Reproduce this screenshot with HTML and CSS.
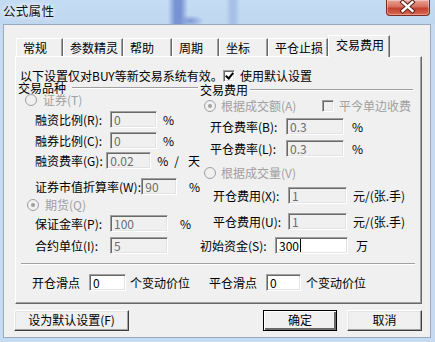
FILE: index.html
```html
<!DOCTYPE html>
<html>
  <head>
    <title>公式属性</title>
    <link rel="stylesheet" href="styles.css">
  </head>
  <body>
    <div class="window">
      <div class="titlebar">
        <span class="title">公式属性</span>
        <span class="close">
          <svg width="44" height="16" viewBox="0 0 44 16">
            <path d="M17 3 L27 12 M27 3 L17 12" stroke="#5a2018" stroke-width="4.5" stroke-linecap="square"/>
            <path d="M17 3 L27 12 M27 3 L17 12" stroke="#fff" stroke-width="2.5" stroke-linecap="square"/>
          </svg>
        </span>
      </div>
      <div class="client">
        <div class="tabs">
          <span class="tab" style="width:47px">常规</span>
          <span class="tab" style="width:60px">参数精灵</span>
          <span class="tab" style="width:49px">帮助</span>
          <span class="tab" style="width:47px">周期</span>
          <span class="tab" style="width:49px">坐标</span>
          <span class="tab" style="width:60px">平仓止损</span>
          <span class="tab active">交易费用</span>
        </div>
        <div class="panel">
          <div class="note">
            <span class="note-text">以下设置仅对BUY等新交易系统有效。</span>
            <span class="check on"></span>使用默认设置
          </div>
          <div class="cols">
            <!-- 交易品种 -->
            <div class="col left">
              <div class="group g-left">交易品种</div>
              <div class="opt off o-stock"><span class="radio"></span>证券(T)</div>
              <div class="field f1">
                <span class="lbl" style="width:75px">融资比例(R):</span>
                <span class="inp" style="width:47px">0</span>
                <span class="unit u6">%</span>
              </div>
              <div class="field f2">
                <span class="lbl" style="width:75px">融券比例(C):</span>
                <span class="inp" style="width:47px">0</span>
                <span class="unit u6">%</span>
              </div>
              <div class="field f3">
                <span class="lbl" style="width:75px">融资费率(G):</span>
                <span class="inp" style="width:47px">0.02</span>
                <span class="unit u6">%</span><span class="unit slash">/</span><span class="unit day">天</span>
              </div>
              <div class="field f4">
                <span class="lbl" style="width:111px">证券市值折算率(W):</span>
                <span class="inp" style="width:37px">90</span>
                <span class="unit u12">%</span>
              </div>
              <div class="opt off o-fut"><span class="radio dot"></span>期货(Q)</div>
              <div class="field f5">
                <span class="lbl" style="width:75px">保证金率(P):</span>
                <span class="inp" style="width:58px">100</span>
                <span class="unit u12">%</span>
              </div>
              <div class="field f6">
                <span class="lbl" style="width:75px">合约单位(I):</span>
                <span class="inp" style="width:58px">5</span>
              </div>
            </div>
            <!-- 交易费用 -->
            <div class="col right">
              <div class="group g-right">交易费用</div>
              <div class="opt off o-amount">
                <span class="radio dot"></span><span class="opt-text">根据成交额(A)</span>
                <span class="check"></span>平今单边收费
              </div>
              <div class="field r1">
                <span class="lbl" style="width:76px">开仓费率(B):</span>
                <span class="inp" style="width:58px">0.3</span>
                <span class="unit u8">%</span>
              </div>
              <div class="field r2">
                <span class="lbl" style="width:76px">平仓费率(L):</span>
                <span class="inp" style="width:58px">0.3</span>
                <span class="unit u8">%</span>
              </div>
              <div class="opt off o-volume"><span class="radio"></span>根据成交量(V)</div>
              <div class="field r3">
                <span class="lbl" style="width:75px">开仓费用(X):</span>
                <span class="inp" style="width:59px">1</span>
                <span class="unit u6">元/(张.手)</span>
              </div>
              <div class="field r4">
                <span class="lbl" style="width:75px">平仓费用(U):</span>
                <span class="inp" style="width:59px">1</span>
                <span class="unit u6">元/(张.手)</span>
              </div>
              <div class="field r5">
                <span class="lbl" style="width:75px">初始资金(S):</span>
                <span class="inp live" style="width:73px">300<span class="caret"></span></span>
                <span class="unit u8">万</span>
              </div>
            </div>
          </div>
          <div class="sep"></div>
          <div class="slip">
            <span class="slip-lbl">开仓滑点</span>
            <span class="inp live" style="width:37px">0</span>
            <span class="slip-unit">个变动价位</span>
            <span class="slip-lbl">平仓滑点</span>
            <span class="inp live" style="width:35px">0</span>
            <span class="slip-unit last">个变动价位</span>
          </div>
        </div>
        <div class="buttons">
          <span class="btn" style="width:115px">设为默认设置(F)</span>
          <span class="btn default" style="width:74px">确定</span>
          <span class="btn" style="width:75px">取消</span>
        </div>
      </div>
    </div>
  </body>
</html>
```

FILE: styles.css
```css
body {
  margin: 0;
  font-family: "Noto Sans CJK SC", "Liberation Sans", sans-serif;
  font-size: 12px;
  color: #000;
}
.window {
  width: 435px;
  height: 342px;
  overflow: hidden;
  background: #c6dbf1;
}
.titlebar {
  height: 24px;
  display: flex;
  justify-content: space-between;
  align-items: flex-start;
  background:
    radial-gradient(ellipse 14px 6px at 190px 21px, #7d98d6 0%, rgba(125,152,214,0) 100%),
    linear-gradient(90deg, rgba(0,0,0,0) 168px, #7893d4 175px, #7893d4 181px, rgba(0,0,0,0) 188px),
    linear-gradient(90deg, rgba(0,0,0,0) 226px, #a9c0e6 231px, #a9c0e6 235px, rgba(0,0,0,0) 240px),
    linear-gradient(#c4dbf4, #c0d7f0);
}
.title {
  margin: 4px 0 0 3px;
  font-size: 12.5px;
  letter-spacing: 0.3px;
  line-height: 14px;
  color: #111;
  text-shadow: 0 0 4px #fff, 0 0 6px #fff;
}
.close {
  margin-right: 5px;
  width: 44px;
  height: 16px;
  box-sizing: border-box;
  border: 1px solid #7d2a20;
  border-top: none;
  border-radius: 0 0 4px 4px;
  background: linear-gradient(#e9a497, #d56f5f 45%, #c5402f 55%, #d66a52);
  box-shadow: inset 0 0 0 1px rgba(255,255,255,0.35);
  display: flex;
}
.close svg {
  margin: -1px 0 0 -1px;
}
.client {
  margin-left: 3px;
  width: 428px;
  height: 314px;
  box-sizing: border-box;
  border: 1px solid #98a9bf;
  background: #f0f0f0;
}
.tabs {
  margin: 10px 0 0 12px;
  height: 21px;
  display: flex;
  align-items: flex-end;
}
.tab {
  height: 18px;
  box-sizing: border-box;
  padding: 1px 0 0 6px;
  line-height: 16px;
  border-top: 1px solid #fff;
  border-left: 1px solid #fff;
  border-right: 1px solid #696969;
  box-shadow: inset -1px 0 #a0a0a0;
  background: #f0f0f0;
}
.tab.active {
  width: 62px;
  height: 22px;
  margin-bottom: -1px;
  padding: 1px 0 0 7px;
  position: relative;
  z-index: 1;
}
.panel {
  margin-left: 11px;
  width: 407px;
  height: 248px;
  box-sizing: border-box;
  border: 1px solid;
  border-color: #fff #696969 #696969 #fff;
  box-shadow: inset -1px -1px #a0a0a0;
}
.note {
  margin: 13px 0 0 4px;
  height: 12px;
  line-height: 12px;
  display: flex;
  align-items: center;
}
.note-text {
  width: 203px;
  white-space: nowrap;
}
.check {
  width: 12px;
  height: 12px;
  box-sizing: border-box;
  margin-right: 5px;
  border: 1px solid;
  border-color: #a0a0a0 #fff #fff #a0a0a0;
  box-shadow: inset 1px 1px #696969, inset -1px -1px #e3e3e3;
  background: #f0f0f0;
  position: relative;
}
.check.on {
  background: #fff;
}
.check.on::after {
  content: "";
  position: absolute;
  left: 3px;
  top: 0px;
  width: 3px;
  height: 6px;
  border: solid #000;
  border-width: 0 2px 2px 0;
  transform: rotate(40deg);
}
.cols {
  display: flex;
  margin-left: 2px;
}
.col.left {
  width: 182px;
}
.col.right {
  width: 215px;
}
.group {
  height: 12px;
  line-height: 12px;
  display: flex;
  align-items: center;
  white-space: nowrap;
}
.group::after {
  content: "";
  flex: 1;
  height: 0;
  border-top: 1px solid #a0a0a0;
  border-bottom: 1px solid #fff;
}
.g-left::after {
  margin: 0 2px 0 6px;
}
.g-right {
  margin-top: 2px;
}
.g-right::after {
  margin: 0 2px 0 2px;
}
.opt {
  height: 12px;
  line-height: 12px;
  display: flex;
  align-items: center;
  white-space: nowrap;
}
.opt.off {
  color: #a0a0a0;
}
.radio {
  width: 12px;
  height: 12px;
  box-sizing: border-box;
  border-radius: 50%;
  border: 1px solid #a0a0a0;
  background: #f0f0f0;
  margin-right: 6px;
  position: relative;
}
.radio.dot::after {
  content: "";
  position: absolute;
  left: 3px;
  top: 3px;
  width: 4px;
  height: 4px;
  border-radius: 50%;
  background: #a0a0a0;
}
.o-stock { margin-left: 7px; }
.o-fut { margin: 4px 0 0 9px; }
.o-amount { margin: 4px 0 0 4px; }
.o-amount .radio,
.o-volume .radio { margin-right: 5px; }
.opt-text { width: 101px; }
.o-volume { margin: 10px 0 0 4px; }
.field {
  height: 17px;
  display: flex;
  align-items: center;
  white-space: nowrap;
}
.lbl {
  line-height: 12px;
}
.inp {
  height: 17px;
  box-sizing: border-box;
  padding-left: 3px;
  line-height: 15px;
  border: 1px solid;
  border-color: #a0a0a0 #fff #fff #a0a0a0;
  box-shadow: inset 1px 1px #696969, inset -1px -1px #e3e3e3;
  background: #f0f0f0;
  color: #6d6d6d;
  display: flex;
  align-items: center;
}
.inp.live {
  background: #fff;
  color: #000;
}
.caret {
  width: 1px;
  height: 13px;
  background: #000;
  margin-left: 1px;
}
.unit { line-height: 12px; }
.u6 { margin-left: 6px; }
.u8 { margin-left: 8px; }
.u12 { margin-left: 12px; }
.slash { margin-left: 6px; }
.day { margin-left: 9px; }
.left .field { margin-left: 17px; }
.f1 { margin-top: 5px; }
.f2 { margin-top: 4px; }
.f3 { margin-top: 3px; }
.f4 { margin-top: 9px; }
.f5 { margin-top: 4px; }
.f6 { margin-top: 5px; }
.r1 { margin: 6px 0 0 10px; }
.r2 { margin: 5px 0 0 10px; }
.r3 { margin: 8px 0 0 13px; }
.r4 { margin: 9px 0 0 13px; }
.r5 { margin: 7px 0 0 0; }
.sep {
  margin: 9px 0 0 5px;
  width: 394px;
  height: 0;
  border-top: 1px solid #a0a0a0;
  border-bottom: 1px solid #fff;
}
.slip {
  margin: 9px 0 0 16px;
  height: 17px;
  display: flex;
  align-items: center;
  white-space: nowrap;
}
.slip-lbl {
  width: 57px;
}
.slip-unit {
  margin-left: 4px;
  width: 79px;
}
.slip-unit.last {
  margin-left: 5px;
}
.buttons {
  margin: 6px 8px 0 10px;
  display: flex;
}
.btn {
  height: 21px;
  box-sizing: border-box;
  border: 1px solid;
  border-color: #fff #404040 #404040 #fff;
  box-shadow: inset -1px -1px #a0a0a0, inset 1px 1px #e3e3e3;
  text-align: center;
  line-height: 18px;
}
.btn.default {
  margin-left: auto;
  margin-right: 10px;
  border: 1px solid #000;
  box-shadow: inset 1px 1px #fff, inset -2px -2px #696969, inset -1px -1px #404040;
}
```
